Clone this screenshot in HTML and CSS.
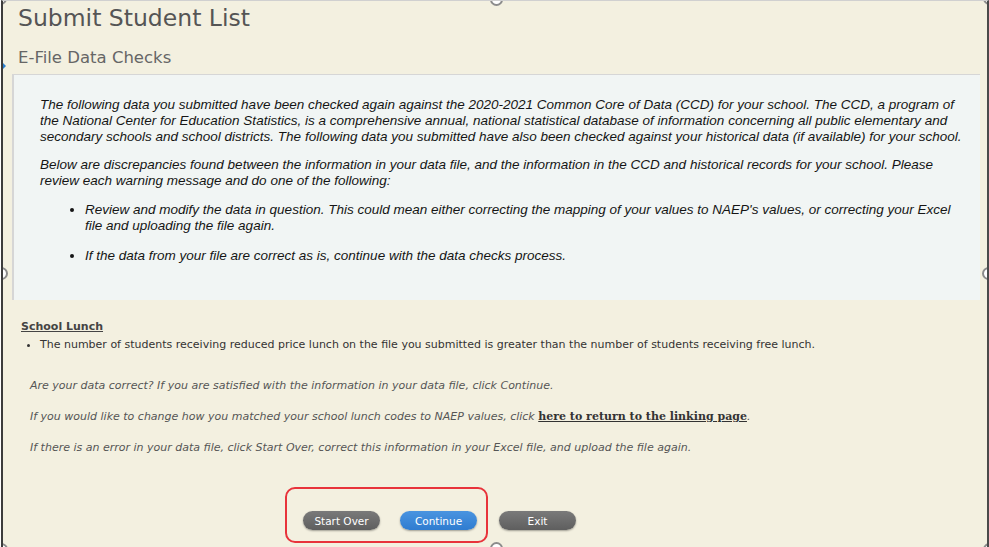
FILE: index.html
```html
<!DOCTYPE html>
<html lang="en">
<head>
  <meta charset="UTF-8">
  <title>Submit Student List</title>
  <link rel="stylesheet" href="styles.css">
</head>
<body>
  <div class="frame">
    <h1 class="page-title">Submit Student List</h1>
    <h2 class="section-title">E-File Data Checks</h2>
    <span class="marker"></span>

    <div class="intro">
      <p>The following data you submitted have been checked again against the 2020-2021 Common Core of Data (CCD) for your school. The CCD, a program of the National Center for Education Statistics, is a comprehensive annual, national statistical database of information concerning all public elementary and secondary schools and school districts. The following data you submitted have also been checked against your historical data (if available) for your school.</p>
      <p>Below are discrepancies found between the information in your data file, and the information in the CCD and historical records for your school. Please review each warning message and do one of the following:</p>
      <ul>
        <li>Review and modify the data in question. This could mean either correcting the mapping of your values to NAEP's values, or correcting your Excel file and uploading the file again.</li>
        <li>If the data from your file are correct as is, continue with the data checks process.</li>
      </ul>
    </div>

    <div class="check">
      <h3>School Lunch</h3>
      <ul>
        <li>The number of students receiving reduced price lunch on the file you submitted is greater than the number of students receiving free lunch.</li>
      </ul>
    </div>

    <p class="note">Are your data correct? If you are satisfied with the information in your data file, click Continue.</p>
    <p class="note">If you would like to change how you matched your school lunch codes to NAEP values, click <a href="#">here to return to the linking page</a>.</p>
    <p class="note">If there is an error in your data file, click Start Over, correct this information in your Excel file, and upload the file again.</p>

    <div class="actions">
      <div class="highlight">
        <button class="btn">Start Over</button>
        <button class="btn primary">Continue</button>
      </div>
      <button class="btn">Exit</button>
    </div>

    <span class="handle tl"></span>
    <span class="handle tm"></span>
    <span class="handle tr"></span>
    <span class="handle ml"></span>
    <span class="handle mr"></span>
    <span class="handle bl"></span>
    <span class="handle bm"></span>
    <span class="handle br"></span>
  </div>
</body>
</html>
```

FILE: styles.css
```css
body {
  margin: 0;
  background: #ffffff;
  font-family: "DejaVu Sans", Verdana, sans-serif;
}
.frame {
  position: relative;
  box-sizing: border-box;
  width: 988px;
  height: 547px;
  margin-left: 1px;
  padding: 0 7px 0 9px;
  background: #f3f0e0;
  border-top: 1px solid #d0d0d0;
  border-left: 2px solid #3c3c3c;
  border-right: 2px solid #4a4a4a;
  overflow: hidden;
}
.page-title {
  margin: 3px 0 0 6px;
  font-size: 23.5px;
  font-weight: normal;
  color: #555;
  line-height: 28px;
}
.section-title {
  margin: 16px 0 0 6px;
  font-size: 16.5px;
  font-weight: normal;
  color: #666;
  line-height: 20px;
  padding-bottom: 6px;
}
.marker {
  position: absolute;
  left: 0;
  top: 62px;
  border-top: 3px solid transparent;
  border-bottom: 3px solid transparent;
  border-left: 3px solid #2b7fd0;
}
.intro {
  background: #f1f5f4;
  border-top: 1px solid #d6d6d6;
  border-left: 2px solid #d6d6d6;
  padding: 22px 13px 36px 26px;
  font-family: "Liberation Sans", Arial, sans-serif;
  font-style: italic;
  font-size: 13.5px;
  line-height: 16px;
  color: #151515;
}
.intro p {
  margin: 0 0 12px;
}
.intro ul {
  margin: 13px 0 0;
  padding-left: 45px;
}
.intro li {
  margin-bottom: 14px;
}
.intro li:last-child {
  margin-bottom: 0;
}
.check {
  margin: 20px 0 0 9px;
  font-size: 11px;
  color: #333;
}
.check h3 {
  margin: 0;
  font-size: 11px;
  font-weight: bold;
  text-decoration: underline;
  color: #444;
  line-height: 14px;
}
.check ul {
  margin: 4px 0 0;
  padding-left: 19px;
  line-height: 14px;
}
.note {
  margin: 0 0 17px 18px;
  font-size: 11px;
  font-style: italic;
  color: #555;
  line-height: 14px;
}
.check + .note {
  margin-top: 27px;
}
.note a {
  font-family: "DejaVu Serif", Georgia, serif;
  font-style: normal;
  font-weight: bold;
  font-size: 11px;
  color: #333;
}
.actions {
  display: flex;
  align-items: flex-end;
  gap: 11px;
  margin: 32px 0 0 273px;
}
.highlight {
  display: flex;
  gap: 20px;
  padding: 22px 9px 11px 16px;
  border: 2px solid #e8333b;
  border-radius: 10px;
}
.actions > .btn {
  margin-bottom: 13px;
}
.btn {
  width: 77px;
  height: 19px;
  padding: 0;
  border: none;
  border-radius: 10px;
  background: linear-gradient(#7a7a7a, #5e5e5e);
  color: #fff;
  font-family: "DejaVu Sans", Verdana, sans-serif;
  font-size: 10.5px;
  box-shadow: 0 1px 2px rgba(0, 0, 0, 0.35);
}
.btn.primary {
  background: linear-gradient(#4a94e0, #2f7cd0);
}
.handle {
  position: absolute;
  width: 9px;
  height: 9px;
  border: 2px solid #8c8c8c;
  border-radius: 50%;
  background: #fff;
}
.tl { left: -9px; top: -9px; }
.tm { left: 487px; top: -8px; }
.tr { right: -9px; top: -9px; }
.ml { left: -8px; top: 266px; }
.mr { right: -8px; top: 266px; }
.bl { left: -8px; bottom: -9px; }
.bm { left: 487px; bottom: -8px; }
.br { right: -9px; bottom: -9px; }
```
